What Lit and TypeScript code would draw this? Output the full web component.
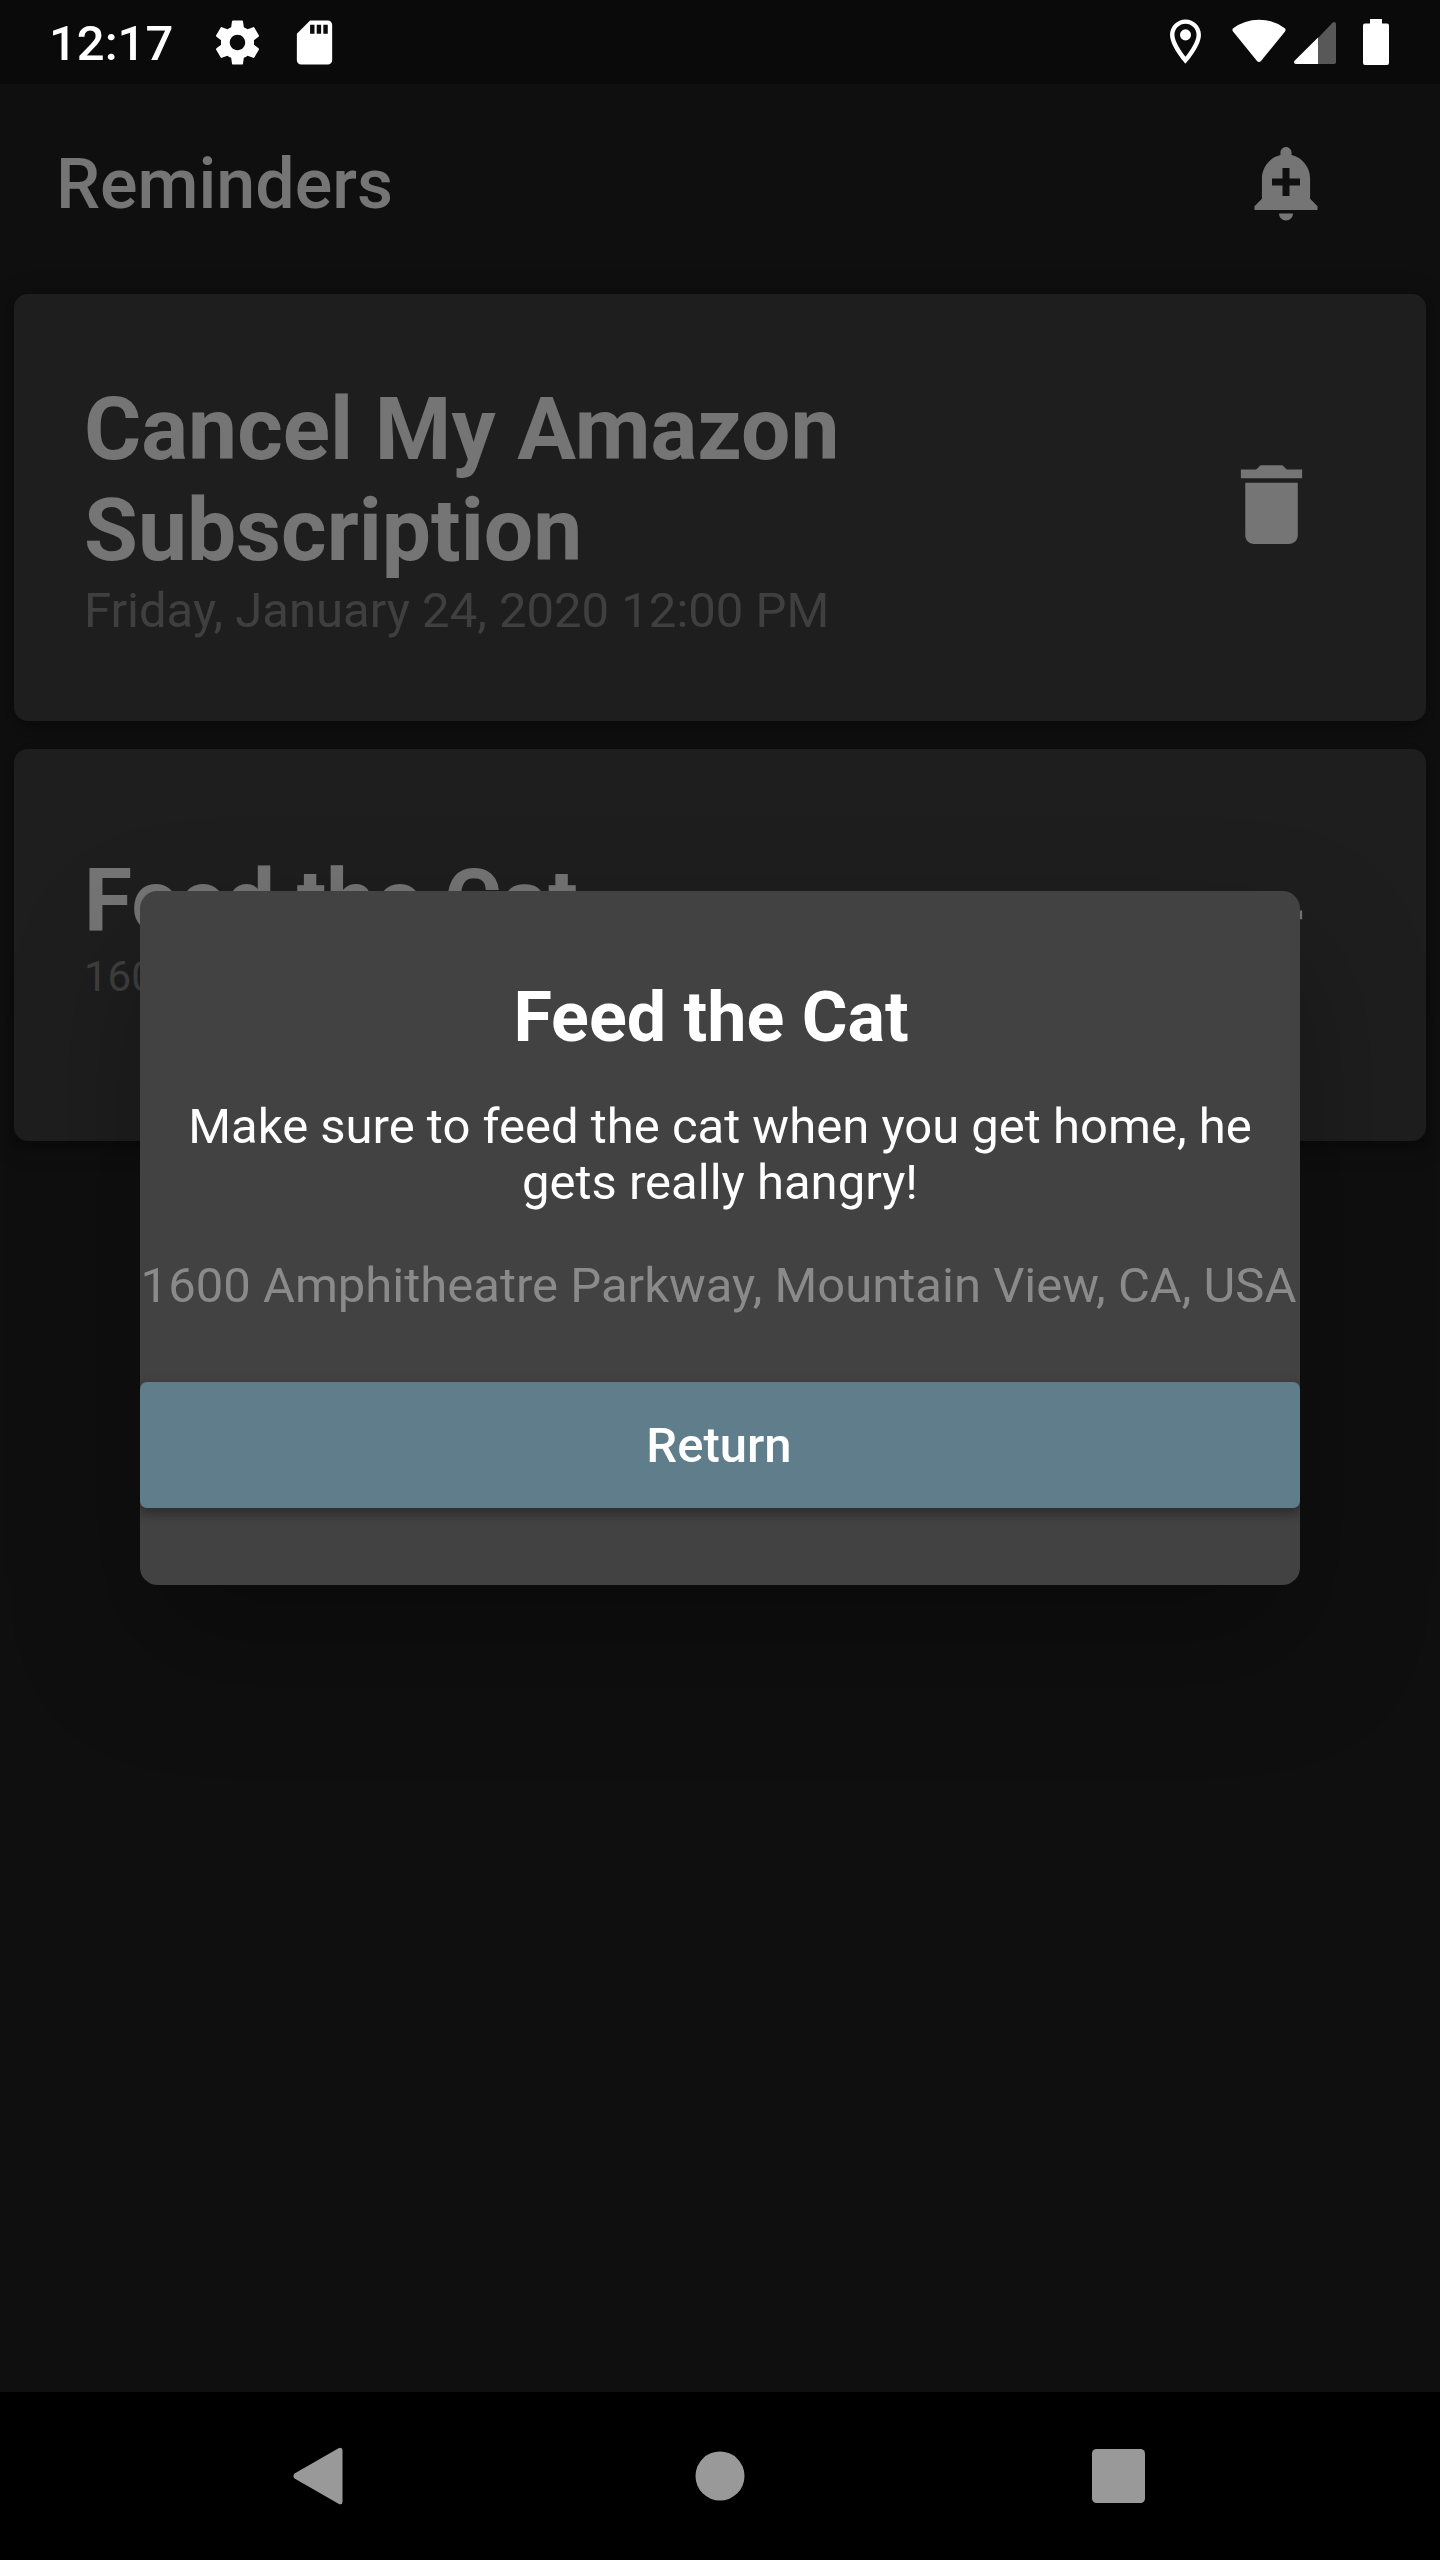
import { LitElement, html, css, svg } from "lit";
import { customElement, property } from "lit/decorators.js";

const settingsIcon = svg`<path d="M19.43 12.98c.04-.32.07-.64.07-.98s-.03-.66-.07-.98l2.110-1.650c.19-.15.24-.42.12-.64l-2-3.460c-.12-.22-.39-.3-.61-.22l-2.490 1c-.52-.4-1.080-.73-1.690-.98l-.38-2.650C14.460 2.180 14.250 2 14 2h-4c-.25 0-.46.18-.49.42l-.38 2.650c-.61.25-1.170.59-1.690.98l-2.490-1c-.23-.09-.49 0-.61.22l-2 3.460c-.13.22-.07.49.12.64l2.110 1.650c-.04.32-.07.65-.07.98s.03.66.07.98l-2.110 1.650c-.19.15-.24.42-.12.64l2 3.460c.12.22.39.3.61.22l2.490-1c.52.4 1.080.73 1.690.98l.38 2.650c.03.24.24.42.49.42h4c.25 0 .46-.18.49-.42l.38-2.650c.61-.25 1.170-.59 1.690-.98l2.490 1c.23.09.49 0 .61-.22l2-3.460c.12-.22.07-.49-.12-.64l-2.110-1.650zM12 15.500c-1.930 0-3.500-1.570-3.500-3.500s1.570-3.500 3.500-3.500 3.500 1.570 3.500 3.500-1.570 3.500-3.500 3.500z"/>`;
const sdCardIcon = svg`<path d="M18 2h-8L4.02 8 4 20c0 1.1.9 2 2 2h12c1.1 0 2-.9 2-2V4c0-1.1-.9-2-2-2zm-6 6h-2V4h2v4zm3 0h-2V4h2v4zm3 0h-2V4h2v4z"/>`;
const placeIcon = svg`<path d="M12 2C8.13 2 5 5.13 5 9c0 5.25 7 13 7 13s7-7.75 7-13c0-3.87-3.13-7-7-7zM7 9c0-2.76 2.24-5 5-5s5 2.24 5 5c0 2.88-2.88 7.19-5 9.88C9.92 16.21 7 11.85 7 9z"/><circle cx="12" cy="9" r="2.5"/>`;
const addAlertIcon = svg`<path d="M10.01 21.01c0 1.1.89 1.99 1.99 1.99s1.99-.89 1.99-1.99h-3.98zm8.87-4.19V11c0-3.25-2.25-5.97-5.29-6.69v-.72C13.59 2.71 12.88 2 12 2s-1.59.71-1.59 1.59v.72C7.37 5.03 5.12 7.75 5.12 11v5.82L3 18.94V20h18v-1.06l-2.12-2.12zM16 13.01h-3v3h-2v-3H8V11h3V8h2v3h3v2.01z"/>`;
const deleteIcon = svg`<path d="M6 19c0 1.1.9 2 2 2h8c1.1 0 2-.9 2-2V7H6v12zM19 4h-3.5l-1-1h-5l-1 1H5v2h14V4z"/>`;

@customElement("status-bar")
class StatusBar extends LitElement {
  static styles = css`
    :host {
      display: flex;
      align-items: flex-start;
      height: 84px;
      box-sizing: border-box;
      padding: 0 51px 0 49px;
      background: #0a0a0a;
      color: #fff;
    }
    svg {
      display: block;
      fill: currentColor;
      flex: none;
    }
    .clock {
      width: 162px;
      padding-top: 16px;
      font-size: 49px;
      font-weight: 500;
      line-height: 56px;
      white-space: nowrap;
    }
    .small {
      width: 53px;
      height: 53px;
      margin-top: 16px;
    }
    .gap {
      margin-left: 24px;
    }
    .spacer {
      flex: 1;
    }
    .pin {
      width: 53px;
      height: 53px;
      margin: 15px 19.5px 0 0;
    }
    .wifi {
      margin: 19px 8.500px 0 0;
    }
    .signal {
      margin: 22px 27px 0 0;
    }
    .battery {
      margin-top: 19px;
    }
  `;
  render() {
    return html`
      <span class="clock">12:17</span>
      <svg class="small" viewBox="0 0 24 24">${settingsIcon}</svg>
      <svg class="small gap" viewBox="0 0 24 24">${sdCardIcon}</svg>
      <span class="spacer"></span>
      <svg class="pin" viewBox="0 0 24 24">${placeIcon}</svg>
      <svg class="wifi" width="54" height="44" viewBox="0 0 54 44">
        <path d="M1.200 9.300Q12.500 .7 27 .7T52.800 9.300Q54.300 10.600 53 12.500L29 42Q27 44.200 25 42L1 12.500Q-.3 10.600 1.200 9.300Z" />
      </svg>
      <svg class="signal" width="42" height="42" viewBox="0 0 42 42">
        <path opacity=".32" d="M24 16L38.500 .8Q39.500 0 40.500 0Q42 .3 42 2V40Q42 42 40 42H24Z" />
        <path d="M24 15.500V42H2Q0 42 0 40Q0 39.300 .8 38.500Z" />
      </svg>
      <svg class="battery" width="26" height="46" viewBox="0 0 26 46">
        <path d="M7 0H19V4.500H24Q26 4.500 26 6.500V44Q26 46 24 46H2Q0 46 0 44V6.500Q0 4.500 2 4.500H7Z" />
      </svg>
    `;
  }
}

@customElement("reminder-card")
class ReminderCard extends LitElement {
  @property() heading = "";
  @property() detail = "";
  @property({ type: Boolean, reflect: true }) place = false;

  static styles = css`
    :host {
      display: flex;
      align-items: flex-start;
      justify-content: space-between;
      box-sizing: border-box;
      height: 427px;
      padding: 85px 102px 0 70px;
      border-radius: 14px;
      background: #424242;
      box-shadow: 0 4px 10px rgba(0, 0, 0, 0.2), 0 4px 28px rgba(0, 0, 0, 0.22);
    }
    :host([place]) {
      height: 392px;
      padding-top: 102px;
    }
    .text {
      width: 860px;
    }
    .heading {
      font-size: 87.5px;
      font-weight: 700;
      line-height: 101px;
      color: #fff;
    }
    .detail {
      margin-top: 2px;
      font-size: 49px;
      line-height: 56px;
      color: #8a8a8a;
      white-space: nowrap;
    }
    :host([place]) .detail {
      margin-top: 1px;
      font-size: 42px;
      line-height: 48px;
    }
    .trash {
      width: 105px;
      height: 105px;
      margin-top: 73px;
      fill: #fff;
    }
    :host([place]) .trash {
      margin-top: 41.5px;
    }
  `;
  render() {
    return html`
      <div class="text">
        <div class="heading">${this.heading}</div>
        <div class="detail">${this.detail}</div>
      </div>
      <svg class="trash" viewBox="0 0 24 24">${deleteIcon}</svg>
    `;
  }
}

@customElement("reminder-dialog")
class ReminderDialog extends LitElement {
  static styles = css`
    :host {
      display: flex;
      flex-direction: column;
      box-sizing: border-box;
      width: 1160px;
      height: 694px;
      padding-top: 85px;
      border-radius: 17.5px;
      background: #424242;
      color: #fff;
      text-align: center;
      box-shadow: 0 60px 130px rgba(0, 0, 0, 0.28);
    }
    .title {
      padding-right: 18px;
      font-size: 70px;
      font-weight: 700;
      line-height: 82px;
    }
    .body {
      margin-top: 41px;
      padding: 0 35px;
      font-size: 49px;
      line-height: 56px;
    }
    .address {
      display: flex;
      justify-content: center;
      margin-top: 47px;
      padding-right: 3px;
      font-size: 49px;
      line-height: 56px;
      color: #8a8a8a;
      white-space: nowrap;
    }
    .button {
      margin: 68px 0 0;
      padding: 1px 2px 0 0;
      box-sizing: border-box;
      height: 126px;
      border: 0;
      border-radius: 7px;
      background: #607d8b;
      color: #fff;
      font: 500 49px/56px Roboto, sans-serif;
      box-shadow: 0 7px 10px rgba(0, 0, 0, 0.22), 0 3px 16px rgba(0, 0, 0, 0.12);
      clip-path: inset(-20px 0 -30px 0);
    }
  `;
  render() {
    return html`
      <div class="title">Feed the Cat</div>
      <div class="body">Make sure to feed the cat when you get home, he gets really hangry!</div>
      <div class="address">1600 Amphitheatre Parkway, Mountain View, CA, USA</div>
      <button class="button">Return</button>
    `;
  }
}

@customElement("nav-bar")
class NavBar extends LitElement {
  static styles = css`
    :host {
      display: flex;
      align-items: center;
      box-sizing: border-box;
      height: 168px;
      padding-left: 293px;
      background: #000;
    }
    svg {
      display: block;
      fill: #999;
    }
    .home {
      margin: 0 347px 0 351.5px;
    }
  `;
  render() {
    return html`
      <svg width="50" height="58" viewBox="0 0 50 58">
        <path d="M45.500 1.300Q49.500 -.5 49.500 3.500V54.500Q49.500 58.500 45.500 56.700L2 31.800Q-1.200 29 2 26.200Z" />
      </svg>
      <svg class="home" width="50" height="50" viewBox="0 0 50 50"><circle cx="25" cy="25" r="24.500" /></svg>
      <svg width="53" height="54" viewBox="0 0 53 54"><rect width="53" height="54" rx="4.500" /></svg>
    `;
  }
}

@customElement("app-root")
class AppRoot extends LitElement {
  static styles = css`
    :host {
      display: flex;
      flex-direction: column;
      width: 1440px;
      height: 2560px;
      overflow: hidden;
      font-family: Roboto, sans-serif;
      background: #000;
    }
    .screen {
      position: relative;
      flex: 1;
      overflow: hidden;
      background: #212121;
    }
    .app-bar {
      display: flex;
      align-items: center;
      justify-content: space-between;
      box-sizing: border-box;
      height: 196px;
      padding: 0 112px 0 56px;
      color: #fff;
      font-size: 70px;
      font-weight: 500;
      line-height: 82px;
    }
    .app-title {
      padding-top: 4px;
    }
    .add {
      width: 84px;
      height: 84px;
      fill: #fff;
    }
    .list {
      display: flex;
      flex-direction: column;
      gap: 28px;
      padding: 14px;
    }
    .scrim {
      position: absolute;
      inset: 0;
      display: flex;
      align-items: center;
      justify-content: center;
      background: rgba(0, 0, 0, 0.54);
    }
  `;
  render() {
    return html`
      <status-bar></status-bar>
      <div class="screen">
        <div class="app-bar">
          <div class="app-title">Reminders</div>
          <svg class="add" viewBox="0 0 24 24">${addAlertIcon}</svg>
        </div>
        <div class="list">
          <reminder-card
            heading="Cancel My Amazon Subscription"
            detail="Friday, January 24, 2020 12:00 PM"
          ></reminder-card>
          <reminder-card
            place
            heading="Feed the Cat"
            detail="1600 Amphitheatre Parkway"
          ></reminder-card>
        </div>
        <div class="scrim"><reminder-dialog></reminder-dialog></div>
      </div>
      <nav-bar></nav-bar>
    `;
  }
}
